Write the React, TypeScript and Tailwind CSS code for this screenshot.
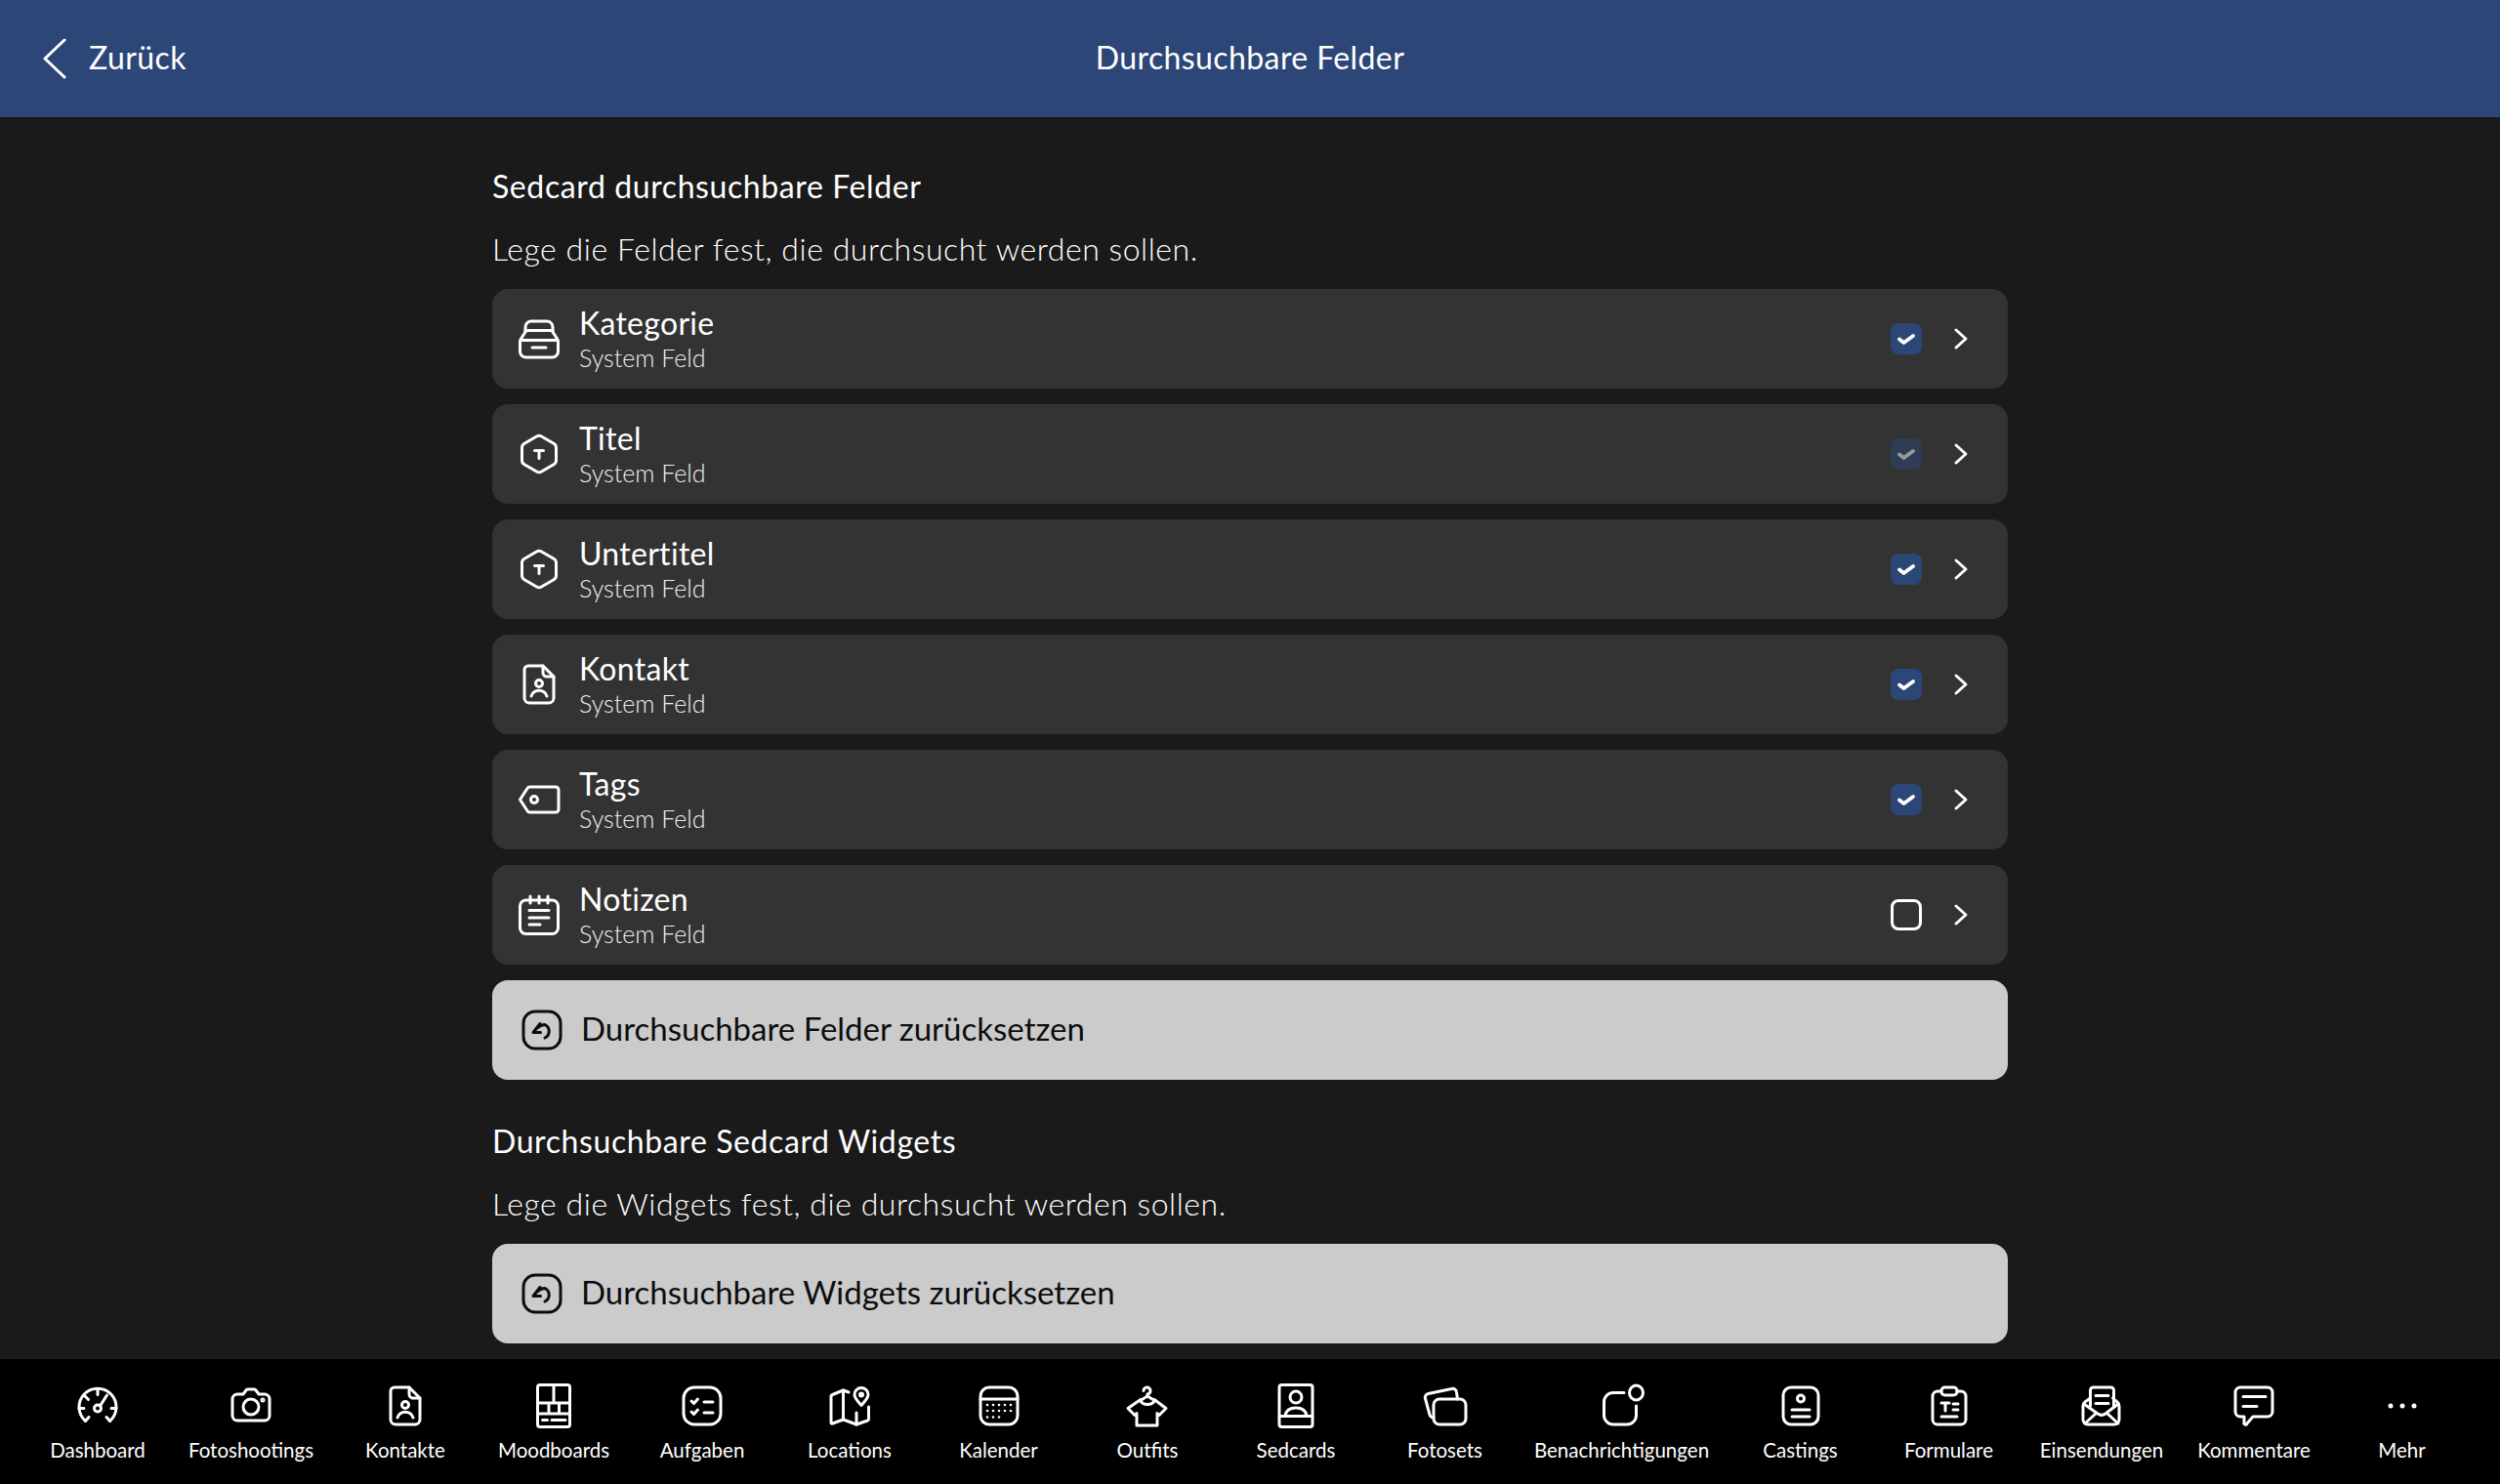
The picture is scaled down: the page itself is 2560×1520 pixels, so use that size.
import type { ReactNode } from "react";

const BLUE = "#2c4677";

function Icon({ children, className = "" }: { children: ReactNode; className?: string }) {
  return (
    <svg
      viewBox="0 0 48 48"
      fill="none"
      stroke="currentColor"
      strokeWidth="3"
      strokeLinecap="round"
      strokeLinejoin="round"
      className={`w-12 h-12 shrink-0 ${className}`}
    >
      {children}
    </svg>
  );
}

const contactIcon = (
  <>
    <path d="M13 5h15l11 11v22a5 5 0 0 1-5 5H14a5 5 0 0 1-5-5V9a4 4 0 0 1 4-4z" />
    <path d="M28 5v7a4 4 0 0 0 4 4h7" />
    <circle cx="24" cy="23" r="3.5" />
    <path d="M16 36a8.5 8.5 0 0 1 16 0" />
  </>
);

const hexIcon = (
  <>
    <path d="M21.5 6 9 13.2a5 5 0 0 0-2.5 4.3v13a5 5 0 0 0 2.5 4.3L21.5 42a5 5 0 0 0 5 0L39 34.8a5 5 0 0 0 2.5-4.3v-13a5 5 0 0 0-2.5-4.3L26.5 6a5 5 0 0 0-5 0z" />
    <path d="M19.5 20.5h9M24 20.5v8" />
  </>
);

const fields = [
  {
    name: "Kategorie",
    checked: true,
    icon: (
      <>
        <path d="M10 17v-5a6 6 0 0 1 6-6h16a6 6 0 0 1 6 6v5" />
        <path d="M10 15.500h28" />
        <path d="M10 17 5.500 24a6 6 0 0 0-1 3v10a6 6 0 0 0 6 6h27a6 6 0 0 0 6-6V27a6 6 0 0 0-1-3L38 17" />
        <path d="M5 25.500h38M17 33h14" />
      </>
    ),
  },
  { name: "Titel", checked: true, disabled: true, icon: hexIcon },
  { name: "Untertitel", checked: true, icon: hexIcon },
  { name: "Kontakt", checked: true, icon: contactIcon },
  {
    name: "Tags",
    checked: true,
    icon: (
      <>
        <path d="M4.5 24 12 12.5a3 3 0 0 1 2.500-1.500H41a3 3 0 0 1 3 3v20a3 3 0 0 1-3 3H14.500a3 3 0 0 1-2.500-1.500z" />
        <circle cx="19" cy="24" r="3.500" />
      </>
    ),
  },
  {
    name: "Notizen",
    checked: false,
    icon: (
      <>
        <rect x="4.5" y="9" width="39" height="34.500" rx="6" />
        <path d="M15 5v7M24 5v7M33 5v7M14 19.500h20M14 27h20M14 34h11" />
      </>
    ),
  },
];

const tabs = [
  {
    label: "Dashboard",
    w: "w-[152px]",
    icon: (
      <>
        <path d="M11.500 39.500a19 19 0 1 1 25 0" />
        <circle cx="24" cy="26.500" r="3.500" />
        <path d="m26.500 24 7-11M24 7.500v5M11 14l3.500 3.500M5 26.500h5M38 26.500h5M11.500 39.500 15 35.500M36.500 39.500 33 35.500" />
      </>
    ),
  },
  {
    label: "Fotoshootings",
    w: "w-[162px]",
    icon: (
      <>
        <path d="M10 12h6l3-4a2 2 0 0 1 1.500-1h7a2 2 0 0 1 1.500 1l3 4h6a5 5 0 0 1 5 5v17a5 5 0 0 1-5 5H10a5 5 0 0 1-5-5V17a5 5 0 0 1 5-5z" />
        <circle cx="24" cy="25" r="8" />
        <circle cx="36" cy="18" r="1" />
      </>
    ),
  },
  { label: "Kontakte", w: "w-[154px]", icon: contactIcon },
  {
    label: "Moodboards",
    w: "w-[150px]",
    icon: (
      <>
        <rect x="7.500" y="2.500" width="33" height="43" rx="2.500" />
        <path d="M24 2.500V21M7.500 21h33M7.500 32h33M19 21v11M29.500 21v11M12.500 38.500h5M22 38.500h14" />
      </>
    ),
  },
  {
    label: "Aufgaben",
    w: "w-[154px]",
    icon: (
      <>
        <rect x="5" y="5" width="38" height="38" rx="11" />
        <path d="m13 19 2.500 2.500 4-4.500M13 30l2.500 2.500 4-4.500M26 20h9M26 31h9" />
      </>
    ),
  },
  {
    label: "Locations",
    w: "w-[148px]",
    icon: (
      <>
        <path d="M23 10 17.500 8 6.500 12.500a2 2 0 0 0-1.500 2V41a1 1 0 0 0 1.500 1l11-4 13.500 5 11.500-4a2 2 0 0 0 1-2V25" />
        <path d="M17.500 8v30M31 31v12" />
        <path d="M36 23.500c-4-4.500-7-7.500-7-11a7 7 0 0 1 14 0c0 3.500-3 6.500-7 11z" />
        <circle cx="36" cy="12.500" r="1.500" />
      </>
    ),
  },
  {
    label: "Kalender",
    w: "w-[157px]",
    icon: (
      <>
        <rect x="5" y="5" width="38" height="38" rx="9" />
        <path d="M5 17h38" />
        <g stroke="none" fill="currentColor">
          {[12, 18, 24, 30, 36].map((x) => (
            <circle key={`a${x}`} cx={x} cy="23" r="1.300" />
          ))}
          {[12, 18, 24, 30, 36].map((x) => (
            <circle key={`b${x}`} cx={x} cy="29" r="1.300" />
          ))}
          {[12, 18, 24].map((x) => (
            <circle key={`c${x}`} cx={x} cy="35.500" r="1.300" />
          ))}
        </g>
      </>
    ),
  },
  {
    label: "Outfits",
    w: "w-[148px]",
    icon: (
      <>
        <path d="M20 8.500a3.500 3.500 0 1 1 4 3.500v2" />
        <path d="M24 14l-6.500 4c-1 2.500 3 4.500 6.500 4.500s7.500-2 6.500-4.500z" />
        <path d="M17 17.500 4 26.500l7 7 2-2V44h21V31.500l2 2 7-7L31 17.500" />
      </>
    ),
  },
  {
    label: "Sedcards",
    w: "w-[156px]",
    icon: (
      <>
        <rect x="7" y="2.500" width="34" height="43" rx="2.500" />
        <circle cx="24" cy="15" r="6" />
        <path d="M7 34.500h34M13 34c1-6 5-8 11-8s10 2 11 8" />
      </>
    ),
  },
  {
    label: "Fotosets",
    w: "w-[149px]",
    icon: (
      <>
        <rect x="12" y="17" width="33" height="26" rx="6" />
        <path d="M12 36a4 4 0 0 1-4-3L3.500 16.500a4 4 0 0 1 3-5l24-5a4 4 0 0 1 5 3.500l1 7" />
      </>
    ),
  },
  {
    label: "Benachrichtigungen",
    w: "w-[213px]",
    icon: (
      <>
        <path d="M26 10.500H15a9.500 9.500 0 0 0-9.500 9.500v13.500A9.500 9.500 0 0 0 15 43h14a9.500 9.500 0 0 0 9.500-9.500V24" />
        <ellipse cx="38.500" cy="10.500" rx="7" ry="7.500" />
      </>
    ),
  },
  {
    label: "Castings",
    w: "w-[153px]",
    icon: (
      <>
        <rect x="6" y="5" width="36" height="38" rx="8" />
        <circle cx="24" cy="16.500" r="3.500" />
        <path d="M15 28h18M15 35h18" />
      </>
    ),
  },
  {
    label: "Formulare",
    w: "w-[151px]",
    icon: (
      <>
        <path d="M16 9h-4a5 5 0 0 0-5 5v24a5 5 0 0 0 5 5h24a5 5 0 0 0 5-5V14a5 5 0 0 0-5-5h-4" />
        <rect x="16" y="5" width="16" height="8" rx="3.500" />
        <path d="M16 21h8M20 21v8M28 22h5M28 28h5M16 35h16" />
      </>
    ),
  },
  {
    label: "Einsendungen",
    w: "w-[162px]",
    icon: (
      <>
        <path d="M12.500 24V8a3 3 0 0 1 3-3h18a3 3 0 0 1 3 3v16" />
        <path d="M18 13.500h13M18 21.500h13" />
        <path d="M12.500 16l-5.500 4a5 5 0 0 0-2 4v14a5 5 0 0 0 5 5h27a5 5 0 0 0 5-5V24a5 5 0 0 0-2-4l-4.500-4" />
        <path d="m6 22 14 10a7 7 0 0 0 8 0l13-10M7 42l12-11M41 42 29 31" />
      </>
    ),
  },
  {
    label: "Kommentare",
    w: "w-[150px]",
    icon: (
      <>
        <path d="M10 5h28a5 5 0 0 1 5 5v20a5 5 0 0 1-5 5H23l-6 7a1.500 1.500 0 0 1-3-1v-6h-4a5 5 0 0 1-5-5V10a5 5 0 0 1 5-5z" />
        <path d="M13 14.500h23M13 24.500h14" />
      </>
    ),
  },
  {
    label: "Mehr",
    w: "w-[153px]",
    icon: (
      <g stroke="none" fill="currentColor">
        <circle cx="12" cy="24" r="2.500" />
        <circle cx="24" cy="24" r="2.500" />
        <circle cx="36" cy="24" r="2.500" />
      </g>
    ),
  },
];

function FieldRow({ field }: { field: (typeof fields)[number] }) {
  return (
    <div className="flex items-center h-[102px] pl-6 pr-9 rounded-2xl bg-[#333333] text-white">
      <Icon>{field.icon}</Icon>
      <div className="flex-1 ml-[17px] mb-[3px]">
        <div className="text-[32px] leading-10 tracking-[0.3px]">{field.name}</div>
        <div className="text-[25px] leading-[30px] font-light text-[#f0f0f0]">System Feld</div>
      </div>
      {field.checked ? (
        <div
          className={`flex items-center justify-center w-8 h-8 rounded-lg bg-[#2c4677] ${field.disabled ? "opacity-50" : ""}`}
        >
          <svg viewBox="0 0 24 24" fill="none" stroke="white" strokeWidth="3.8" strokeLinecap="round" strokeLinejoin="round" className="w-6 h-6">
            <path d="m5 12.500 4.500 3.500 9.500-7" />
          </svg>
        </div>
      ) : (
        <div className="w-8 h-8 rounded-lg border-[3px] border-white" />
      )}
      <svg viewBox="0 0 24 24" fill="none" stroke="white" strokeWidth="3" strokeLinecap="round" strokeLinejoin="round" className="w-6 h-6 ml-7">
        <path d="m7 3 10 9-10 9" />
      </svg>
    </div>
  );
}

function ResetButton({ label }: { label: string }) {
  return (
    <button className="flex items-center w-full h-[102px] pl-[27px] rounded-2xl bg-[#cbcbcb] text-[#0d0d0d]">
      <Icon>
        <rect x="5" y="5" width="38" height="38" rx="12" />
        <path d="M22 17.500 15 26.500h7.500" />
        <path d="M18.500 22.500c2.500-2.500 5.500-4 8.500-4a7.500 7.500 0 0 1 0 13.500" />
      </Icon>
      <span className="ml-4 mb-[3px] text-[33px]">{label}</span>
    </button>
  );
}

function SectionHead({ title, text }: { title: string; text: string }) {
  return (
    <>
      <h2 className="text-[32px] leading-[48px] tracking-[0.6px] text-white">{title}</h2>
      <p className="mt-4 mb-[17px] text-[32px] leading-[48px] tracking-[0.55px] font-light text-white">{text}</p>
    </>
  );
}

export default function App() {
  return (
    <div className="flex flex-col h-screen bg-[#1a1a1a] font-[Lato,sans-serif] overflow-hidden">
      {/* Top bar */}
      <div className="relative flex items-center h-[120px] shrink-0 pl-10 text-white" style={{ backgroundColor: BLUE }}>
        <svg viewBox="0 0 28 42" fill="none" stroke="white" strokeWidth="3" strokeLinecap="round" strokeLinejoin="round" className="w-7 h-[42px]">
          <path d="M26 2 6 21l20 19" />
        </svg>
        <span className="ml-[23px] mb-[3px] text-[32px] tracking-[0.4px]">Zurück</span>
        <span className="absolute inset-x-0 mb-[3px] text-center text-[32px] tracking-[0.4px]">Durchsuchbare Felder</span>
      </div>

      {/* Settings */}
      <div className="flex-1 min-h-0 w-[1552px] mx-auto pt-[47px]">
        <SectionHead title="Sedcard durchsuchbare Felder" text="Lege die Felder fest, die durchsucht werden sollen." />
        <div className="flex flex-col gap-4">
          {fields.map((field) => (
            <FieldRow key={field.name} field={field} />
          ))}
          <ResetButton label="Durchsuchbare Felder zurücksetzen" />
        </div>
        <div className="mt-[39px]">
          <SectionHead title="Durchsuchbare Sedcard Widgets" text="Lege die Widgets fest, die durchsucht werden sollen." />
          <ResetButton label="Durchsuchbare Widgets zurücksetzen" />
        </div>
      </div>

      {/* Tab bar */}
      <div className="flex h-[128px] shrink-0 px-6 pt-6 bg-black text-white">
        {tabs.map((tab) => (
          <div key={tab.label} className={`flex flex-col items-center ${tab.w}`}>
            <Icon>{tab.icon}</Icon>
            <span className="mt-2 text-[20.5px] leading-[26px] whitespace-nowrap">{tab.label}</span>
          </div>
        ))}
      </div>
    </div>
  );
}
